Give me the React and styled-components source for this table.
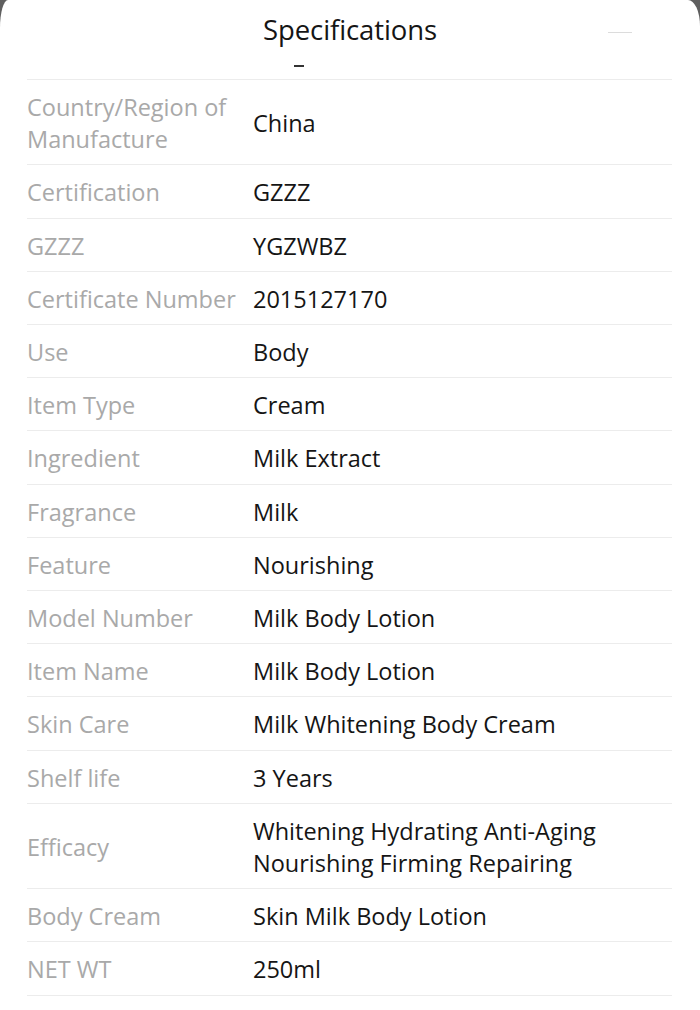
import React from "react";
import styled, { createGlobalStyle } from "styled-components";

const Global = createGlobalStyle`
  html, body { margin: 0; padding: 0; background: #5f5f5f; }
  body { font-family: "Open Sans", "Noto Sans", sans-serif; }
`;

const Sheet = styled.div`
  width: 700px;
  height: 1010px;
  background: #ffffff;
  border-top-left-radius: 8px 28px;
  border-top-right-radius: 12px 26px;
  box-sizing: border-box;
  overflow: hidden;
  display: flex;
  flex-direction: column;
`;

const Header = styled.div`
  position: relative;
  height: 79px;
  display: flex;
  flex-direction: column;
  align-items: center;
`;

const Title = styled.h1`
  margin: 10px 0 0;
  font-size: 27.5px;
  font-weight: 400;
  line-height: 40px;
  color: #151515;
  letter-spacing: -0.1px;
`;

const Dash = styled.span`
  position: absolute;
  left: 294px;
  top: 65px;
  width: 10px;
  height: 2px;
  background: #333;
`;

const CloseLine = styled.span`
  position: absolute;
  left: 608px;
  top: 32px;
  width: 24px;
  height: 1px;
  background: #dcdcdc;
`;

const Table = styled.div`
  margin: 0 28px 0 27px;
  border-top: 1px solid #ececec;
`;

const Row = styled.div`
  display: grid;
  grid-template-columns: 226px 1fr;
  align-items: center;
  padding: 11px 0 9px;
  border-bottom: 1px solid #ececec;
  font-size: 23.5px;
  line-height: 32.2px;
`;

const Label = styled.div`
  color: #a9a9a9;
`;

const Value = styled.div`
  color: #151515;
`;

const specs = [
  ["Country/Region of Manufacture", "China"],
  ["Certification", "GZZZ"],
  ["GZZZ", "YGZWBZ"],
  ["Certificate Number", "2015127170"],
  ["Use", "Body"],
  ["Item Type", "Cream"],
  ["Ingredient", "Milk Extract"],
  ["Fragrance", "Milk"],
  ["Feature", "Nourishing"],
  ["Model Number", "Milk Body Lotion"],
  ["Item Name", "Milk Body Lotion"],
  ["Skin Care", "Milk Whitening Body Cream"],
  ["Shelf life", "3 Years"],
  ["Efficacy", "Whitening Hydrating Anti-Aging Nourishing Firming Repairing"],
  ["Body Cream", "Skin Milk Body Lotion"],
  ["NET WT", "250ml"],
];

export default function App() {
  return (
    <>
      <Global />
      <Sheet>
        <Header>
          <Title>Specifications</Title>
          <Dash />
          <CloseLine />
        </Header>
        <Table>
          {specs.map(([k, v]) => (
            <Row key={k}>
              <Label>{k}</Label>
              <Value>{v}</Value>
            </Row>
          ))}
        </Table>
      </Sheet>
    </>
  );
}
